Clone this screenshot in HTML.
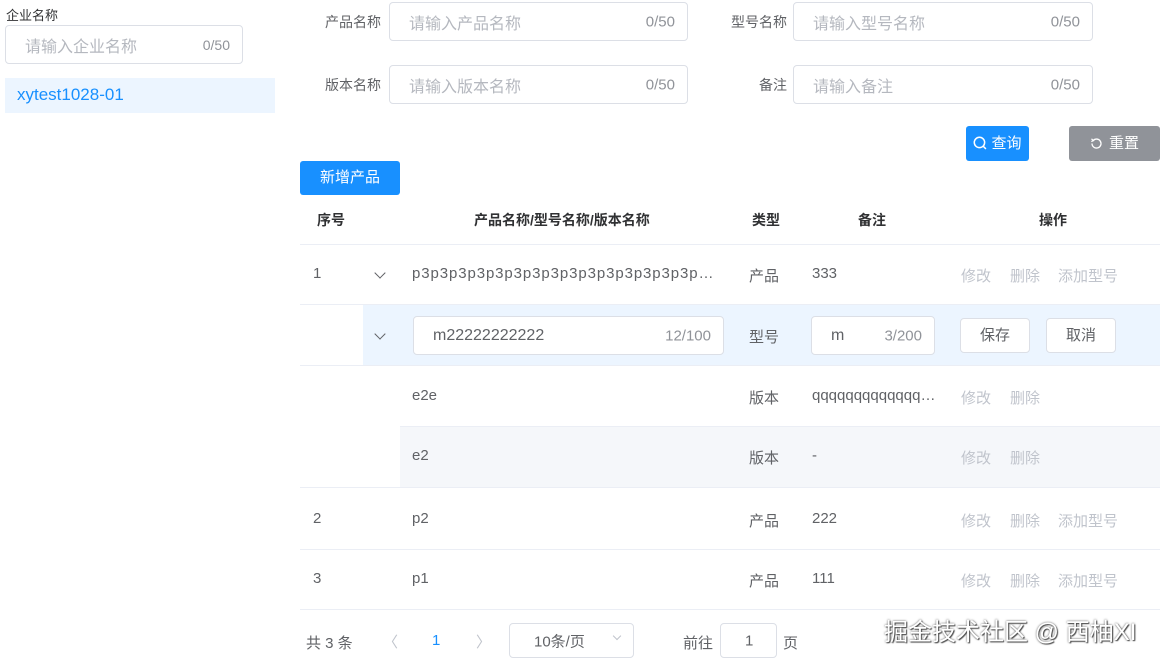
<!DOCTYPE html>
<html><head><meta charset="utf-8"><style>
*{box-sizing:border-box;margin:0;padding:0}
body{width:1164px;height:660px;overflow:hidden;background:#fff;font-family:"Liberation Sans","Noto Sans CJK SC",sans-serif;font-size:14px;color:#606266;position:relative}
.a{position:absolute;white-space:nowrap}
.inp{position:absolute;border:1px solid #dcdfe6;border-radius:4px;background:#fff;font-size:16px}
.inp .ph{position:absolute;left:19px;top:50%;transform:translateY(-50%);color:#b5b8bf}
.inp .ct{position:absolute;right:12px;top:50%;transform:translateY(-50%);color:#909399;font-size:15px}
.lab{position:absolute;font-size:14px;color:#606266;text-align:right}
.line{position:absolute;left:300px;width:860px;height:1px;background:#ebeef5}
.th{position:absolute;top:210px;font-weight:bold;color:#303133;font-size:14px}
.op{color:#c0c4cc}
.chev{position:absolute;width:8px;height:8px;border-right:1px solid #606266;border-bottom:1px solid #606266;transform:rotate(45deg)}
.btn{position:absolute;border:1px solid #dcdfe6;border-radius:4px;background:#fff;text-align:center;color:#606266;font-size:15px}
.d{font-size:15px}
</style></head><body>
<div class="a" style="left:6px;top:5px;font-size:13px;color:#303133">企业名称</div>
<div class="inp" style="left:5px;top:25px;width:238px;height:39px"><span class="ph">请输入企业名称</span><span class="ct" style="font-size:14px">0/50</span></div>
<div class="a" style="left:5px;top:78px;width:270px;height:35px;background:#ecf5ff"></div>
<div class="a" style="left:17px;top:85px;font-size:17px;color:#1890ff">xytest1028-01</div>

<div class="lab" style="left:300px;width:81px;top:12px">产品名称</div>
<div class="inp" style="left:389px;top:2px;width:299px;height:39px"><span class="ph">请输入产品名称</span><span class="ct">0/50</span></div>
<div class="lab" style="left:700px;width:87px;top:12px">型号名称</div>
<div class="inp" style="left:793px;top:2px;width:300px;height:39px"><span class="ph">请输入型号名称</span><span class="ct">0/50</span></div>
<div class="lab" style="left:300px;width:81px;top:75px">版本名称</div>
<div class="inp" style="left:389px;top:65px;width:299px;height:39px"><span class="ph">请输入版本名称</span><span class="ct">0/50</span></div>
<div class="lab" style="left:700px;width:87px;top:75px">备注</div>
<div class="inp" style="left:793px;top:65px;width:300px;height:39px"><span class="ph">请输入备注</span><span class="ct">0/50</span></div>

<div class="a" style="left:966px;top:126px;width:63px;height:35px;background:#1890ff;border-radius:3px;color:#fff;font-size:15px;line-height:35px;text-align:center"><svg width="14" height="14" viewBox="0 0 13 13" style="vertical-align:-2px;margin-right:4px"><circle cx="6" cy="6" r="4.8" fill="none" stroke="#fff" stroke-width="1.4"/><path d="M9.5 9.5L12 12" stroke="#fff" stroke-width="1.4"/></svg>查询</div>
<div class="a" style="left:1069px;top:126px;width:91px;height:35px;background:#909399;border-radius:3px;color:#fff;font-size:15px;line-height:35px;text-align:center"><svg width="13" height="13" viewBox="0 0 13 13" style="vertical-align:-2px;margin-right:6px"><path d="M3.2 3.5A4.5 4.5 0 1 1 2 6.5" fill="none" stroke="#fff" stroke-width="1.3"/><path d="M1.5 1.8L3.4 3.7L1.3 4.6" fill="none" stroke="#fff" stroke-width="1.2"/></svg>重置</div>
<div class="a" style="left:300px;top:161px;width:100px;height:34px;background:#1890ff;border-radius:3px;color:#fff;line-height:34px;text-align:center;font-size:15px">新增产品</div>

<div class="th" style="left:317px">序号</div>
<div class="th" style="left:474px">产品名称/型号名称/版本名称</div>
<div class="th" style="left:752px">类型</div>
<div class="th" style="left:858px">备注</div>
<div class="th" style="left:1039px">操作</div>
<div class="line" style="top:244px"></div>

<div class="a d" style="left:313px;top:265px">1</div>
<div class="chev" style="left:376px;top:269px"></div>
<div class="a d" style="left:412px;top:265px;letter-spacing:0.9px">p3p3p3p3p3p3p3p3p3p3p3p3p3p3p3p…</div>
<div class="a d" style="left:749px;top:265px">产品</div>
<div class="a d" style="left:812px;top:265px">333</div>
<div class="a op d" style="left:961px;top:265px">修改</div><div class="a op d" style="left:1010px;top:265px">删除</div><div class="a op d" style="left:1058px;top:265px">添加型号</div>
<div class="line" style="top:304px"></div>

<div class="a" style="left:363px;top:305px;width:797px;height:60px;background:#ecf5ff"></div>
<div class="chev" style="left:376px;top:330px"></div>
<div class="inp" style="left:413px;top:316px;width:311px;height:39px"><span class="ph" style="color:#606266">m22222222222</span><span class="ct">12/100</span></div>
<div class="a d" style="left:749px;top:326px">型号</div>
<div class="inp" style="left:811px;top:316px;width:124px;height:39px"><span class="ph" style="color:#606266">m</span><span class="ct">3/200</span></div>
<div class="btn" style="left:960px;top:318px;width:70px;height:35px;line-height:33px">保存</div>
<div class="btn" style="left:1046px;top:318px;width:70px;height:35px;line-height:33px">取消</div>
<div class="line" style="top:365px"></div>

<div class="a d" style="left:412px;top:387px">e2e</div>
<div class="a d" style="left:749px;top:387px">版本</div>
<div class="a d" style="left:812px;top:387px">qqqqqqqqqqqqq…</div>
<div class="a op d" style="left:961px;top:387px">修改</div><div class="a op d" style="left:1010px;top:387px">删除</div>
<div class="a" style="left:400px;top:426px;width:760px;height:61px;background:#f5f7fa;border-top:1px solid #ebeef5"></div>
<div class="a d" style="left:412px;top:447px">e2</div>
<div class="a d" style="left:749px;top:447px">版本</div>
<div class="a d" style="left:812px;top:447px">-</div>
<div class="a op d" style="left:961px;top:447px">修改</div><div class="a op d" style="left:1010px;top:447px">删除</div>
<div class="line" style="top:487px"></div>

<div class="a d" style="left:313px;top:510px">2</div>
<div class="a d" style="left:412px;top:510px">p2</div>
<div class="a d" style="left:749px;top:510px">产品</div>
<div class="a d" style="left:812px;top:510px">222</div>
<div class="a op d" style="left:961px;top:510px">修改</div><div class="a op d" style="left:1010px;top:510px">删除</div><div class="a op d" style="left:1058px;top:510px">添加型号</div>
<div class="line" style="top:549px"></div>
<div class="a d" style="left:313px;top:570px">3</div>
<div class="a d" style="left:412px;top:570px">p1</div>
<div class="a d" style="left:749px;top:570px">产品</div>
<div class="a d" style="left:812px;top:570px">111</div>
<div class="a op d" style="left:961px;top:570px">修改</div><div class="a op d" style="left:1010px;top:570px">删除</div><div class="a op d" style="left:1058px;top:570px">添加型号</div>
<div class="line" style="top:609px"></div>

<div class="a" style="left:306px;top:632px;font-size:15px">共 3 条</div>
<div class="a" style="left:383px;top:631px;color:#c0c4cc;font-size:15px">〈</div>
<div class="a" style="left:432px;top:632px;color:#1890ff;font-size:15px">1</div>
<div class="a" style="left:476px;top:631px;color:#c0c4cc;font-size:15px">〉</div>
<div class="inp" style="left:509px;top:623px;width:125px;height:35px"><span class="ph" style="left:24px;color:#606266;font-size:15px">10条/页</span><span class="chev" style="left:104px;top:9px;width:6px;height:6px;border-color:#c0c4cc"></span></div>
<div class="a" style="left:683px;top:632px;font-size:15px">前往</div>
<div class="inp" style="left:720px;top:623px;width:57px;height:35px"><span class="ph" style="left:24px;color:#606266;font-size:15px">1</span></div>
<div class="a" style="left:783px;top:632px;font-size:15px">页</div>
<div class="a" style="left:884px;top:612px;font-size:24px;color:#fff;text-shadow:0 0 2px #555,1px 1px 1px #444">掘金技术社区 @ 西柚XI</div>
</body></html>
